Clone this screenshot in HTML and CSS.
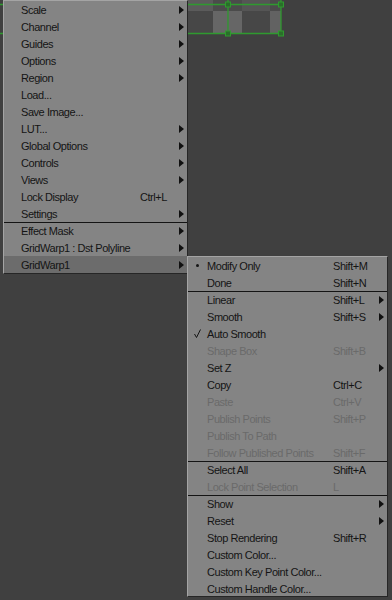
FILE: index.html
```html
<!DOCTYPE html>
<html lang="en">
<head>
    <meta charset="UTF-8">
    <meta name="viewport" content="width=device-width, initial-scale=1.0">
    <title>Viewer Context Menu</title>
    <link rel="stylesheet" href="styles.css">
</head>
<body>
    <!-- Viewer canvas behind the menus -->
    <svg class="viewer" width="392" height="40" viewBox="0 0 392 40">
        <rect x="187" y="0" width="26" height="11" fill="#5b5b5b"/>
        <rect x="213" y="0" width="29" height="11" fill="#4b4b4b"/>
        <rect x="242" y="0" width="28" height="11" fill="#555555"/>
        <rect x="270" y="0" width="11" height="11" fill="#4b4b4b"/>
        <rect x="187" y="11" width="26" height="23" fill="#474747"/>
        <rect x="213" y="11" width="29" height="23" fill="#666666"/>
        <rect x="242" y="11" width="28" height="23" fill="#474747"/>
        <rect x="270" y="11" width="11" height="23" fill="#626262"/>
        <g stroke="#2f9a2f" stroke-width="1.3" fill="none">
            <line x1="0" y1="4.5" x2="281" y2="4.5"/>
            <line x1="0" y1="33.5" x2="281" y2="33.5"/>
            <line x1="228" y1="0" x2="228" y2="34"/>
            <line x1="281" y1="0" x2="281" y2="34"/>
        </g>
        <g fill="#2a6e2a" stroke="#2f9a2f" stroke-width="1">
            <rect x="225.5" y="2" width="5" height="5"/>
            <rect x="278.5" y="2" width="5" height="5"/>
            <rect x="225.5" y="31" width="5" height="5"/>
            <rect x="278.5" y="31" width="5" height="5"/>
        </g>
    </svg>

    <!-- Main viewer menu -->
    <div class="menu menu-main">
        <div class="item"><span class="mark"></span><span class="label">Scale</span><span class="key"></span><span class="arrow"></span></div>
        <div class="item"><span class="mark"></span><span class="label">Channel</span><span class="key"></span><span class="arrow"></span></div>
        <div class="item"><span class="mark"></span><span class="label">Guides</span><span class="key"></span><span class="arrow"></span></div>
        <div class="item"><span class="mark"></span><span class="label">Options</span><span class="key"></span><span class="arrow"></span></div>
        <div class="item"><span class="mark"></span><span class="label">Region</span><span class="key"></span><span class="arrow"></span></div>
        <div class="item"><span class="mark"></span><span class="label">Load...</span><span class="key"></span><span></span></div>
        <div class="item"><span class="mark"></span><span class="label">Save Image...</span><span class="key"></span><span></span></div>
        <div class="item"><span class="mark"></span><span class="label">LUT...</span><span class="key"></span><span class="arrow"></span></div>
        <div class="item"><span class="mark"></span><span class="label">Global Options</span><span class="key"></span><span class="arrow"></span></div>
        <div class="item"><span class="mark"></span><span class="label">Controls</span><span class="key"></span><span class="arrow"></span></div>
        <div class="item"><span class="mark"></span><span class="label">Views</span><span class="key"></span><span class="arrow"></span></div>
        <div class="item"><span class="mark"></span><span class="label">Lock Display</span><span class="key">Ctrl+L</span><span></span></div>
        <div class="item"><span class="mark"></span><span class="label">Settings</span><span class="key"></span><span class="arrow"></span></div>
        <div class="item sep"><span class="mark"></span><span class="label">Effect Mask</span><span class="key"></span><span class="arrow"></span></div>
        <div class="item"><span class="mark"></span><span class="label">GridWarp1 : Dst Polyline</span><span class="key"></span><span class="arrow"></span></div>
        <div class="item active"><span class="mark"></span><span class="label">GridWarp1</span><span class="key"></span><span class="arrow"></span></div>
    </div>

    <!-- GridWarp1 submenu -->
    <div class="menu menu-sub">
        <div class="item"><span class="mark"><span class="dot"></span></span><span class="label">Modify Only</span><span class="key">Shift+M</span><span></span></div>
        <div class="item"><span class="mark"></span><span class="label">Done</span><span class="key">Shift+N</span><span></span></div>
        <div class="item sep"><span class="mark"></span><span class="label">Linear</span><span class="key">Shift+L</span><span class="arrow"></span></div>
        <div class="item"><span class="mark"></span><span class="label">Smooth</span><span class="key">Shift+S</span><span class="arrow"></span></div>
        <div class="item"><span class="mark"><svg class="check" width="7" height="9" viewBox="0 0 7 9"><path d="M0.5 5 L2.5 8.5 L6.5 0.5" fill="none" stroke="#151515" stroke-width="1"/></svg></span><span class="label">Auto Smooth</span><span class="key"></span><span></span></div>
        <div class="item off"><span class="mark"></span><span class="label">Shape Box</span><span class="key">Shift+B</span><span></span></div>
        <div class="item"><span class="mark"></span><span class="label">Set Z</span><span class="key"></span><span class="arrow"></span></div>
        <div class="item"><span class="mark"></span><span class="label">Copy</span><span class="key">Ctrl+C</span><span></span></div>
        <div class="item off"><span class="mark"></span><span class="label">Paste</span><span class="key">Ctrl+V</span><span></span></div>
        <div class="item off"><span class="mark"></span><span class="label">Publish Points</span><span class="key">Shift+P</span><span></span></div>
        <div class="item off"><span class="mark"></span><span class="label">Publish To Path</span><span class="key"></span><span></span></div>
        <div class="item off"><span class="mark"></span><span class="label">Follow Published Points</span><span class="key">Shift+F</span><span></span></div>
        <div class="item sep"><span class="mark"></span><span class="label">Select All</span><span class="key">Shift+A</span><span></span></div>
        <div class="item off"><span class="mark"></span><span class="label">Lock Point Selection</span><span class="key">L</span><span></span></div>
        <div class="item sep"><span class="mark"></span><span class="label">Show</span><span class="key"></span><span class="arrow"></span></div>
        <div class="item"><span class="mark"></span><span class="label">Reset</span><span class="key"></span><span class="arrow"></span></div>
        <div class="item"><span class="mark"></span><span class="label">Stop Rendering</span><span class="key">Shift+R</span><span></span></div>
        <div class="item"><span class="mark"></span><span class="label">Custom Color...</span><span class="key"></span><span></span></div>
        <div class="item"><span class="mark"></span><span class="label">Custom Key Point Color...</span><span class="key"></span><span></span></div>
        <div class="item"><span class="mark"></span><span class="label">Custom Handle Color...</span><span class="key"></span><span></span></div>
    </div>
</body>
</html>
```

FILE: styles.css
```css
body {
    margin: 0;
    width: 392px;
    height: 600px;
    overflow: hidden;
    background-color: #404040;
    font-family: 'Liberation Sans', Arial, sans-serif;
    font-size: 11px;
    letter-spacing: -0.45px;
    color: #141414;
    position: relative;
}

.viewer {
    position: absolute;
    top: 0;
    left: 0;
}

.menu {
    position: absolute;
    box-sizing: border-box;
    background-color: #848484;
    border-top: 1px solid #a4a4a4;
    border-left: 1px solid #a4a4a4;
    border-right: 1px solid #262626;
    border-bottom: 1px solid #262626;
}

.menu-main {
    top: 0;
    left: 3px;
    width: 185px;
}

.menu-sub {
    top: 256px;
    left: 187px;
    width: 201px;
    height: 341px;
}

.item {
    box-sizing: border-box;
    height: 17px;
    display: grid;
    align-items: center;
    white-space: nowrap;
}

.menu-main .item {
    grid-template-columns: 17px 1fr 35px 12px;
}

.menu-sub .item {
    grid-template-columns: 19px 1fr 42px 12px;
}

.item.sep {
    border-top: 1px solid #141414;
}

.item.active {
    background-color: #6c6c6c;
}

.item.off {
    color: #6a6a6a;
}

.mark {
    display: flex;
    align-items: center;
    justify-content: flex-end;
    padding-right: 6px;
    height: 100%;
}

.dot {
    width: 3px;
    height: 3px;
    border-radius: 50%;
    background-color: #151515;
    margin-right: 2px;
}

.check {
    display: block;
}

.arrow {
    width: 0;
    height: 0;
    margin-left: 4px;
    border-top: 4px solid transparent;
    border-bottom: 4px solid transparent;
    border-left: 5px solid #101010;
}
```
